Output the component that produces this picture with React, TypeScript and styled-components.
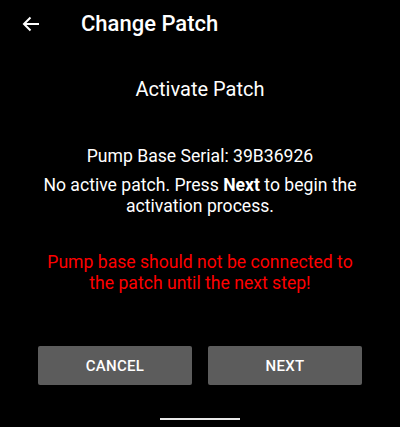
import React from "react";
import styled, { createGlobalStyle } from "styled-components";

const Global = createGlobalStyle`
  html, body { margin: 0; padding: 0; background: #000; }
  body { font-family: Roboto, "Noto Sans", sans-serif; color: #fff; }
  * { box-sizing: border-box; }
`;

const Screen = styled.div`
  width: 400px;
  height: 427px;
  background: #000;
  display: flex;
  flex-direction: column;
`;

const TopBar = styled.header`
  height: 48px;
  display: flex;
  align-items: center;
  padding-left: 22px;
`;

const BackButton = styled.button`
  background: none;
  border: none;
  padding: 0;
  width: 18px;
  height: 16px;
  display: flex;
  align-items: center;
  justify-content: center;
  color: #fff;
  margin-right: 41px;
`;

const Title = styled.h1`
  margin: 0;
  font-size: 22px;
  line-height: 26px;
  font-weight: 500;
  color: #fff;
`;

const Content = styled.main`
  display: flex;
  flex-direction: column;
  align-items: center;
  text-align: center;
  padding: 0 10px;
`;

const Heading = styled.h2`
  margin: 29px 0 0;
  font-size: 20px;
  font-weight: 400;
  line-height: 24px;
`;

const Paragraph = styled.p<{ $top: number; $color?: string }>`
  margin: ${(p) => p.$top}px 0 0;
  font-size: 17.6px;
  line-height: 21px;
  color: ${(p) => p.$color ?? "#fff"};
`;

const Buttons = styled.div`
  display: flex;
  justify-content: center;
  gap: 16px;
  margin-top: auto;
  margin-bottom: 33px;
`;

const ActionButton = styled.button`
  width: 154px;
  height: 39px;
  border: none;
  border-radius: 2px;
  background: #5c5c5c;
  color: #fff;
  font-family: Roboto, sans-serif;
  font-size: 15px;
  font-weight: 500;
  letter-spacing: 0.3px;
`;

const HomeIndicator = styled.div`
  width: 80px;
  height: 2px;
  background: #e8e8e8;
  align-self: center;
  margin-bottom: 7px;
`;

export default function App() {
  return (
    <>
      <Global />
      <Screen>
        <TopBar>
          <BackButton aria-label="Back">
            <svg width="18" height="16" viewBox="0 0 18 16" fill="none" stroke="#fff" strokeWidth="2">
              <path d="M17 8H2M8.5 1.5L2 8l6.5 6.5" />
            </svg>
          </BackButton>
          <Title>Change Patch</Title>
        </TopBar>
        <Content>
          <Heading>Activate Patch</Heading>
          <Paragraph $top={45}>Pump Base Serial: 39B36926</Paragraph>
          <Paragraph $top={8}>
            No active patch. Press <b>Next</b> to begin the
            <br />
            activation process.
          </Paragraph>
          <Paragraph $top={35} $color="#ff0000">
            Pump base should not be connected to
            <br />
            the patch until the next step!
          </Paragraph>
        </Content>
        <Buttons>
          <ActionButton>CANCEL</ActionButton>
          <ActionButton>NEXT</ActionButton>
        </Buttons>
        <HomeIndicator />
      </Screen>
    </>
  );
}
